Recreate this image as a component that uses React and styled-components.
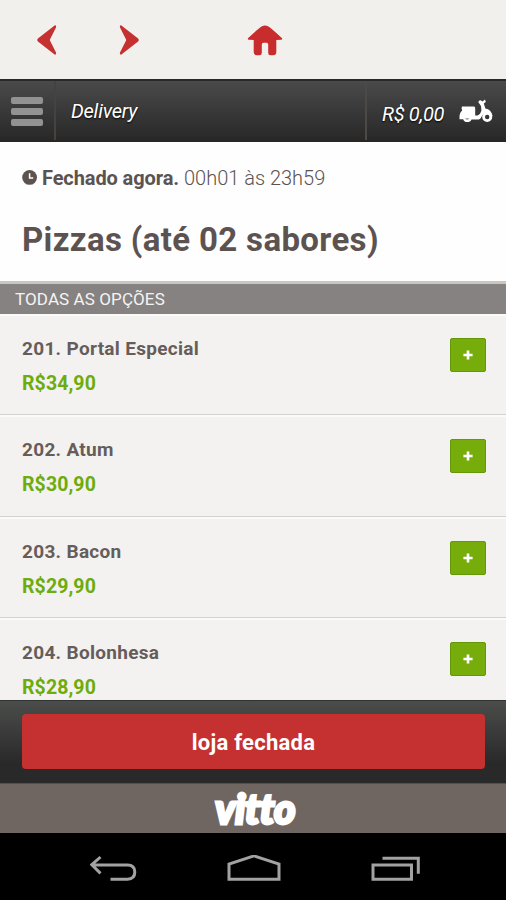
import React from 'react';
import styled, { createGlobalStyle } from 'styled-components';

const items = [
    { id: 201, name: 'Portal Especial', price: 'R$34,90' },
    { id: 202, name: 'Atum', price: 'R$30,90' },
    { id: 203, name: 'Bacon', price: 'R$29,90' },
    { id: 204, name: 'Bolonhesa', price: 'R$28,90' },
];

function BrowserBar() {
    return (
        <BrowserNav>
            <svg width="20" height="30" viewBox="0 0 20 30">
                <path d="M17.6 .4Q19.6 0 19 2.4L12.7 15L19 27.6Q19.6 30 17.6 29.6L.9 16.4Q-.4 15 .9 13.6Z" fill="#c53030" />
            </svg>
            <svg width="20" height="30" viewBox="0 0 20 30">
                <path d="M2.4 .4Q.4 0 1 2.4L7.3 15L1 27.6Q.4 30 2.4 29.6L19.1 16.4Q20.4 15 19.1 13.6Z" fill="#c53030" />
            </svg>
            <HomeLink>
                <svg width="36" height="31" viewBox="0 0 36 31">
                    <path d="M15 1.3Q18 -.5 21 1.3Q24 3 34.8 13Q36 14.6 34 14.7L29.3 14.9V27Q29.3 30.3 26 30.3H23.6Q21.2 30.3 21.2 28V19.5Q21.2 17.8 19.5 17.8H16.5Q14.8 17.8 14.8 19.5V28Q14.8 30.3 12.4 30.3H10Q6.7 30.3 6.7 27V14.9L2 14.7Q0 14.6 1.2 13Q12 3 15 1.3Z" fill="#c92c2c" />
                </svg>
            </HomeLink>
        </BrowserNav>
    )
}

function Scooter() {
    return (
        <svg width="34" height="24" viewBox="0 0 34 24" fill="#fff">
            <path d="M3 7.4H15Q16.2 7.4 16.2 9V16.4H18.5Q21.4 15.5 22.4 11.5L22 7L19.2 2.9L21 1L23.5 2.4L26 .6L26.8 3L24.8 4.6L26.4 9.6Q32.2 10.6 33.6 17L31.8 18.2Q30 14 26.6 13.7Q23.8 14.6 22 18.8Q21.2 20.4 19.5 20.4H12.5Q11.5 23 8 23Q5 23 4.2 20.2H.5Q0 14 3.2 11.6Q2 9 3 7.4Z" />
            <circle cx="28.2" cy="18" r="3.6" fill="#333" stroke="#fff" strokeWidth="2.8" />
            <path d="M6 19.4H10.3Q8.2 21.4 6 19.4Z" fill="#555" />
        </svg>
    )
}

function ProductRow({ item }) {
    return (
        <Row>
            <div>
                <ProductName>{item.id}. {item.name}</ProductName>
                <Price>{item.price}</Price>
            </div>
            <AddButton aria-label="Adicionar">
                <svg width="10" height="10" viewBox="0 0 10 10">
                    <path d="M5 .4V9.6M.4 5H9.6" stroke="#fff" strokeWidth="2.6" />
                </svg>
            </AddButton>
        </Row>
    )
}

function SystemBar() {
    return (
        <SystemNav>
            <svg width="48" height="30" viewBox="0 0 48 30">
                <path d="M10.5 2L1.8 9.7L10.5 18.4M1.8 10H37.5Q44.8 10 44.8 17T37.5 24.3H20.5" />
            </svg>
            <svg width="54" height="30" viewBox="0 0 54 30">
                <path d="M2 24.3V9L27 .9L52 9V24.3Z" />
            </svg>
            <svg width="50" height="30" viewBox="0 0 50 30">
                <path d="M3 10.1H41.5V24.3H3ZM12.5 3.2H48.3V18.8" />
            </svg>
        </SystemNav>
    )
}

export default function App() {
    return (
        <Screen>
            <GlobalStyle />
            <BrowserBar />
            <Header>
                <MenuButton aria-label="Menu">
                    <MenuLine />
                    <MenuLine />
                    <MenuLine />
                </MenuButton>
                <HeaderTitle>Delivery</HeaderTitle>
                <Cart>
                    <Total>R$ 0,00</Total>
                    <Scooter />
                </Cart>
            </Header>
            <Intro>
                <Hours>
                    <svg width="16" height="16" viewBox="0 0 16 16">
                        <circle cx="7.6" cy="7.4" r="7.4" fill="#5c5351" />
                        <path d="M7.6 3.2V8H11.2" fill="none" stroke="#fff" strokeWidth="1.5" />
                    </svg>
                    <Closed>Fechado agora.</Closed>
                    <Time>00h01 às 23h59</Time>
                </Hours>
                <Category>Pizzas (até 02 sabores)</Category>
            </Intro>
            <SectionLabel>TODAS AS OPÇÕES</SectionLabel>
            <List>
                {items.map((item) => <ProductRow key={item.id} item={item} />)}
            </List>
            <Footer>
                <ClosedButton>loja fechada</ClosedButton>
            </Footer>
            <Brand><BrandName>vitto</BrandName></Brand>
            <SystemBar />
        </Screen>
    )
}

const GlobalStyle = createGlobalStyle`
body {
    margin: 0;
    font-family: Roboto, "Liberation Sans", sans-serif;
}
*, *::before {
    box-sizing: border-box;
}
svg {
    display: block;
    flex-shrink: 0;
}
`
const Screen = styled.div`
display: flex;
flex-direction: column;
width: 506px;
height: 900px;
overflow: hidden;
background: #f3f2f0;
`
const BrowserNav = styled.div`
display: flex;
align-items: center;
gap: 62px;
flex: 0 0 79px;
padding: 1px 0 0 37px;
background: #f2f0ec;
`
const HomeLink = styled.div`
margin-left: 46px;
`
const Header = styled.div`
display: flex;
flex: 0 0 63px;
border-top: 2px solid #292929;
border-bottom: 2px solid #2a2625;
background: linear-gradient(#4a4a4a, #282828);
color: #fff;
font-style: italic;
text-shadow: 0 1px 2px #000;
`
const MenuButton = styled.div`
display: flex;
flex-direction: column;
align-items: center;
gap: 4px;
width: 56px;
padding-top: 16px;
border-right: 2px solid #454240;
`
const MenuLine = styled.div`
width: 32px;
height: 7px;
border-radius: 2px;
background: #929292;
`
const HeaderTitle = styled.div`
flex: 1;
padding: 1px 0 0 15px;
font-size: 20px;
line-height: 58px;
letter-spacing: -0.2px;
`
const Cart = styled.div`
display: flex;
align-items: center;
justify-content: space-between;
width: 141px;
padding: 0 13px 0 15px;
border-left: 2px solid #4c4946;
`
const Total = styled.div`
padding-top: 7px;
font-size: 20px;
letter-spacing: -0.3px;
white-space: nowrap;
`
const Intro = styled.div`
flex: 0 0 139px;
padding: 24px 22px 0;
background: #fefefe;
color: #5c5351;
`
const Hours = styled.div`
display: flex;
align-items: center;
height: 24px;
font-size: 20px;
`
const Closed = styled.span`
margin-left: 4px;
font-weight: 700;
letter-spacing: -0.1px;
`
const Time = styled.span`
margin-left: 5px;
font-weight: 300;
`
const Category = styled.div`
margin-top: 30px;
font-size: 33px;
line-height: 40px;
font-weight: 700;
letter-spacing: 0.35px;
white-space: nowrap;
`
const SectionLabel = styled.div`
flex: 0 0 33px;
padding-left: 15px;
border-top: 3px solid #c9c6bd;
background: #868281;
color: #f5f4f3;
font-size: 17px;
line-height: 30px;
letter-spacing: 0.1px;
`
const List = styled.div`
flex: 0 0 386px;
overflow: hidden;
`
const Row = styled.div`
display: flex;
justify-content: space-between;
height: 101.3px;
padding: 22px 20px 0 22px;
border-top: 2px solid #fafafa;
border-bottom: 1px solid #d4d2cf;
`
const ProductName = styled.div`
height: 35px;
margin-top: -1px;
font-size: 19px;
line-height: 24px;
font-weight: 700;
letter-spacing: 0.3px;
color: #665d5b;
`
const Price = styled.div`
font-size: 19.5px;
line-height: 24px;
font-weight: 700;
letter-spacing: 0.1px;
color: #6eac0d;
`
const AddButton = styled.div`
display: flex;
align-items: center;
justify-content: center;
width: 36px;
height: 34px;
border: 1px solid #639809;
border-radius: 2px;
background: #77ad0b;
`
const Footer = styled.div`
flex: 0 0 83px;
padding: 13px 21px 0 22px;
border-top: 1px solid #323333;
background: linear-gradient(#4b4d4b, #292929 75%);
`
const ClosedButton = styled.div`
height: 55px;
border-radius: 4px;
background: #c53131;
color: #fff;
font-size: 22px;
line-height: 57px;
font-weight: 700;
letter-spacing: 0.25px;
text-align: center;
`
const Brand = styled.div`
display: flex;
justify-content: center;
flex: 0 0 50px;
background: #6f6561;
border-top: 1px solid #554e4b;
`
const BrandName = styled.div`
padding: 1px 0 0 4px;
font-family: Lato, sans-serif;
font-size: 41px;
line-height: 48px;
font-style: italic;
font-weight: 900;
letter-spacing: -0.4px;
color: #fff;
-webkit-text-stroke: 2.8px #fff;
`
const SystemNav = styled.div`
display: flex;
align-items: center;
justify-content: space-between;
flex: 1;
padding: 7px 86px 0 90px;
background: #000;

path {
    fill: none;
    stroke: #a2a2a2;
    stroke-width: 3;
}
`
